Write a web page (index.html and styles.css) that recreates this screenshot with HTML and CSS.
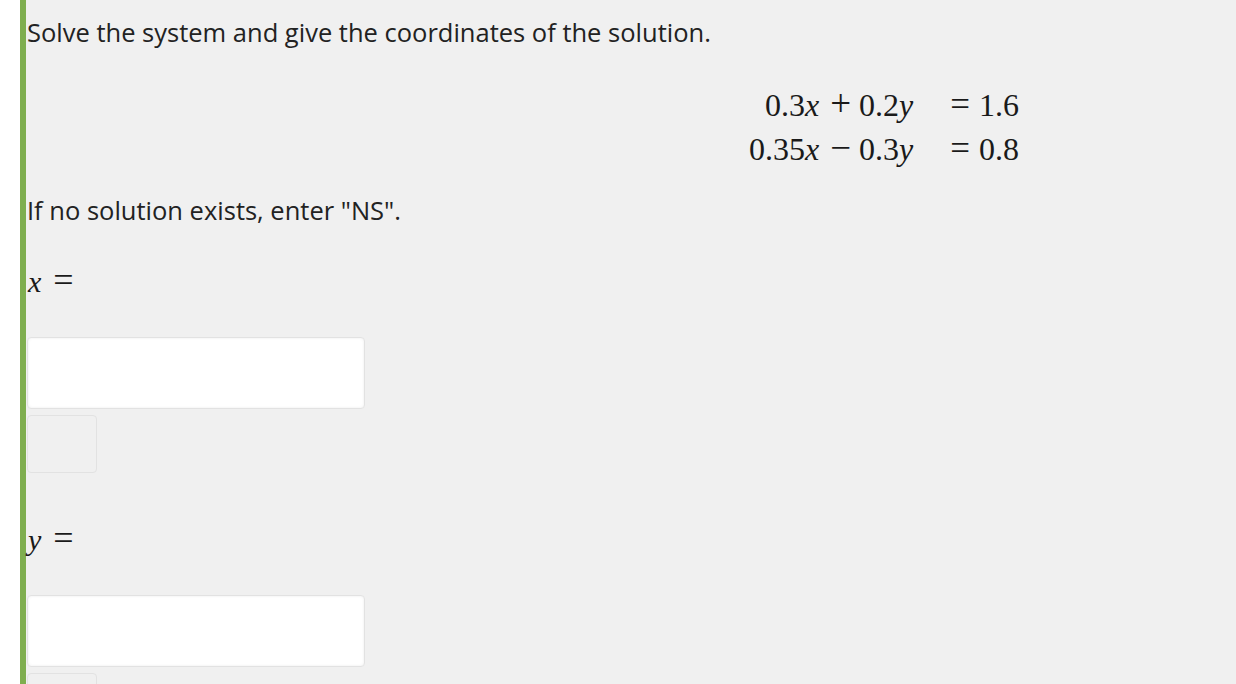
FILE: index.html
```html
<!DOCTYPE html>
<html>
<head>
<meta charset="utf-8">
<link rel="stylesheet" href="styles.css">
</head>
<body>
<div class="question">
  <p class="prompt">Solve the system and give the coordinates of the solution.</p>
  <div class="system">
    <span class="lhs">0.3<i>x</i><span class="op">+</span>0.2<i>y</i></span><span class="rhs"><span class="eq">=</span>1.6</span>
    <span class="lhs">0.35<i>x</i><span class="op">−</span>0.3<i>y</i></span><span class="rhs"><span class="eq">=</span>0.8</span>
  </div>
  <p class="note">If no solution exists, enter "NS".</p>
  <div class="answer">
    <div class="label"><i>x</i><span class="leq">=</span></div>
    <div class="input"></div>
    <div class="mini"></div>
  </div>
  <div class="answer second">
    <div class="label"><i>y</i><span class="leq">=</span></div>
    <div class="input"></div>
    <div class="mini"></div>
  </div>
</div>
</body>
</html>
```
FILE: styles.css
```css
html, body {
  margin: 0;
  padding: 0;
  background: #ffffff;
}
body {
  overflow: hidden;
  height: 684px;
}
.question {
  margin-left: 20px;
  border-left: 6px solid #7fae4f;
  background: #f0f0f0;
  min-height: 684px;
  padding-left: 1px;
  font-family: "Open Sans", sans-serif;
  font-size: 25.5px;
  color: #222;
}
.prompt {
  margin: 0;
  padding-top: 14px;
  line-height: 36px;
}
.system {
  display: grid;
  grid-template-columns: auto auto;
  column-gap: 34px;
  width: max-content;
  margin: 33px 0 0 722px;
  font-family: "Liberation Serif", "Times New Roman", serif;
  font-size: 32px;
  line-height: 44px;
  color: #1a1a1a;
}
.system i { margin-right: 3px; }
.lhs { text-align: right; }
.rhs { text-align: left; }
.op {
  font-size: 37px;
  line-height: 1;
  margin: 0 8px;
}
.eq {
  font-size: 35px;
  line-height: 1;
  margin-right: 9px;
}
.note {
  margin: 21px 0 0;
  line-height: 36px;
}
.answer {
  display: flex;
  flex-direction: column;
  align-items: flex-start;
}
.label {
  font-family: "Liberation Serif", "Times New Roman", serif;
  font-size: 30px;
  line-height: 36px;
  height: 36px;
  margin-top: 34px;
  color: #1a1a1a;
}
.label i { margin-left: 1px; }
.leq {
  font-size: 36px;
  line-height: 1;
  margin-left: 12px;
}
.second .label { margin-top: 47px; }
.input {
  margin-top: 39px;
  width: 336px;
  height: 70px;
  background: #fff;
  border: 1px solid #e2e2e2;
  border-radius: 4px;
  box-shadow: inset 0 0 3px rgba(0,0,0,0.08);
}
.mini {
  margin-top: 6px;
  width: 68px;
  height: 56px;
  border: 1px solid #e2e2e2;
  border-radius: 4px;
  background: #f0f0f0;
}
```
